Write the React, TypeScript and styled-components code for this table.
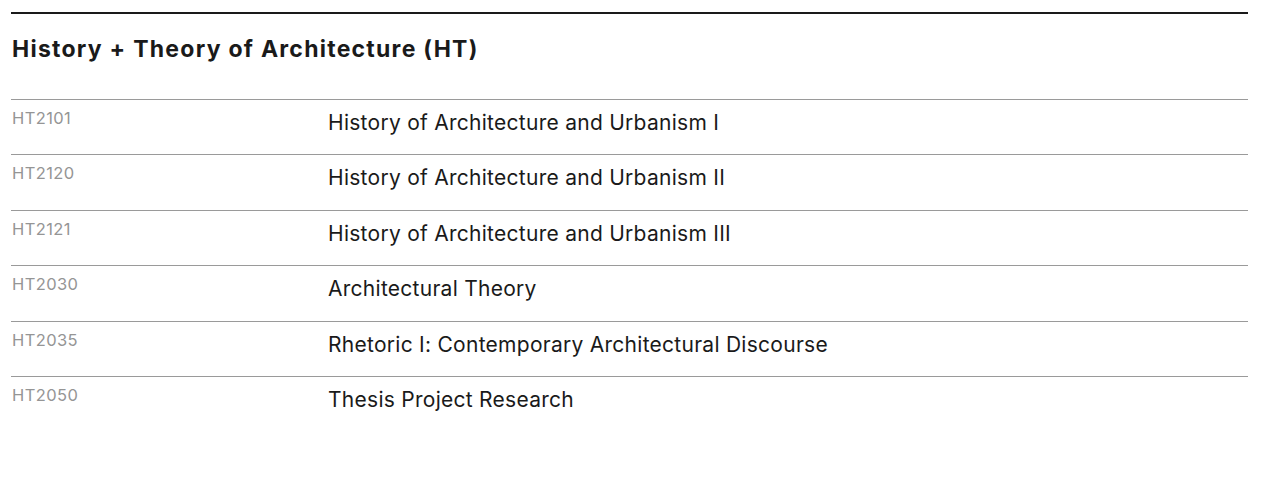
import React from "react";
import styled, { createGlobalStyle } from "styled-components";

const Global = createGlobalStyle`
  html, body { margin: 0; padding: 0; background: #fff; }
  body { font-family: Inter, Roboto, "Liberation Sans", Arial, sans-serif; color: #1a1a1a; }
`;

const Section = styled.section`
  margin: 12px 15px 0 11px;
  border-top: 2px solid #1a1a1a;
`;

const Heading = styled.h2`
  margin: 0;
  padding: 21px 0 0 1px;
  height: 85px;
  box-sizing: border-box;
  font-size: 23px;
  font-weight: 700;
  letter-spacing: 1.25px;
  line-height: 28px;
  color: #1a1a1a;
`;

const List = styled.ul`
  list-style: none;
  margin: 0;
  padding: 0;
`;

const Row = styled.li`
  display: grid;
  grid-template-columns: 317px 1fr;
  height: 55.4px;
  box-sizing: border-box;
  border-top: 1px solid #9a9a9a;
`;

const Code = styled.span`
  padding: 8px 0 0 1px;
  font-size: 16.5px;
  line-height: 20px;
  color: #959595;
  letter-spacing: 0.4px;
`;

const Title = styled.span`
  padding: 10px 0 0 0;
  font-size: 21px;
  line-height: 26px;
  color: #1a1a1a;
  letter-spacing: 0.27px;
`;

const courses = [
  ["HT2101", "History of Architecture and Urbanism I"],
  ["HT2120", "History of Architecture and Urbanism II"],
  ["HT2121", "History of Architecture and Urbanism III"],
  ["HT2030", "Architectural Theory"],
  ["HT2035", "Rhetoric I: Contemporary Architectural Discourse"],
  ["HT2050", "Thesis Project Research"],
];

export default function App() {
  return (
    <>
      <Global />
      <Section>
        <Heading>History + Theory of Architecture (HT)</Heading>
        <List>
          {courses.map(([code, title]) => (
            <Row key={code}>
              <Code>{code}</Code>
              <Title>{title}</Title>
            </Row>
          ))}
        </List>
      </Section>
    </>
  );
}
